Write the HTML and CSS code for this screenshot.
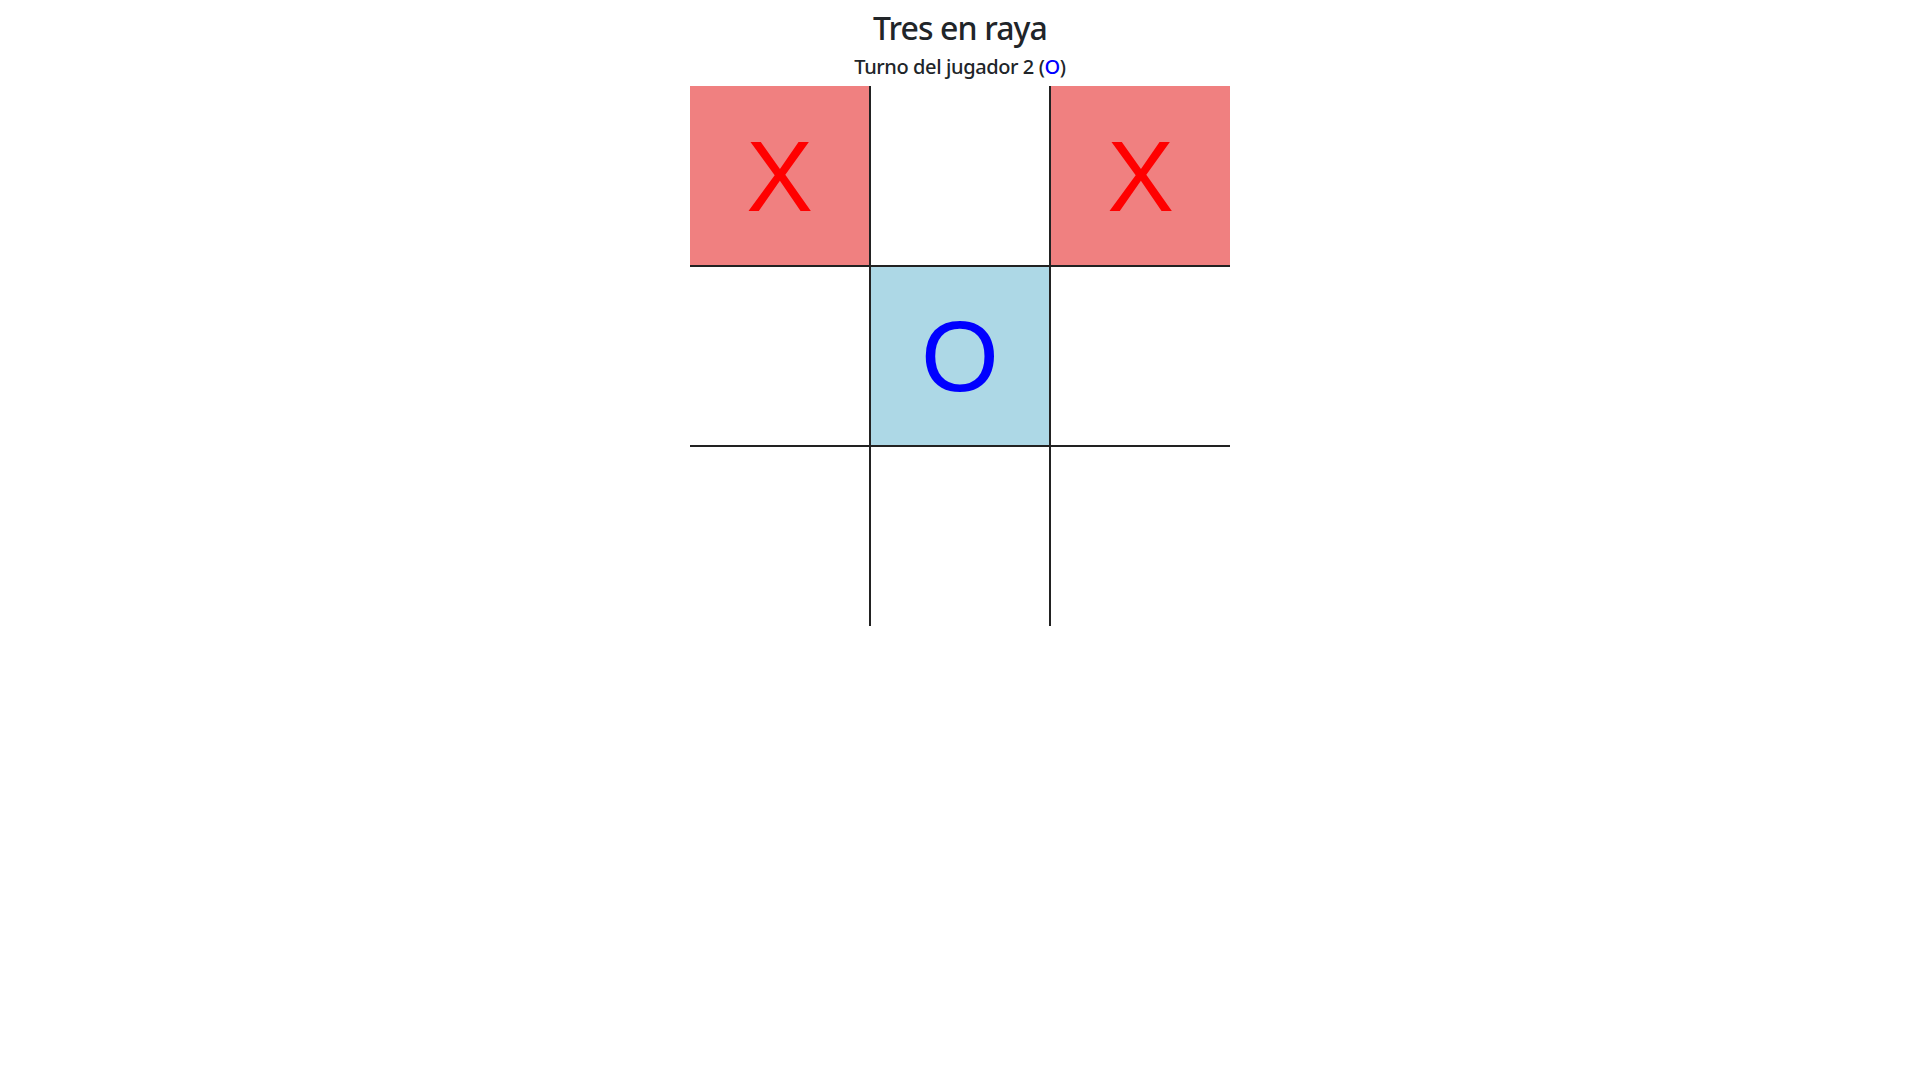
FILE: index.html
```html
<!DOCTYPE html>
<html lang="es">
<head>
<meta charset="utf-8">
<title>Tres en raya</title>
<link rel="stylesheet" href="styles.css">
</head>
<body>
<main class="game">
  <h1 class="title">Tres en raya</h1>
  <p class="turn">Turno del jugador 2 (<span class="turn-o">O</span>)</p>
  <div class="board">
    <div class="cell cell-x">X</div>
    <div class="cell"></div>
    <div class="cell cell-x">X</div>
    <div class="cell"></div>
    <div class="cell cell-o">O</div>
    <div class="cell"></div>
    <div class="cell"></div>
    <div class="cell"></div>
    <div class="cell"></div>
  </div>
</main>
</body>
</html>
```

FILE: styles.css
```css
html, body {
  margin: 0;
  padding: 0;
  background: #ffffff;
}

body {
  font-family: "Noto Sans", "Open Sans", sans-serif;
  color: #212529;
}

.game {
  display: flex;
  flex-direction: column;
  align-items: center;
}

.title {
  margin: 9px 0 0;
  font-size: 32px;
  font-weight: 500;
  line-height: 38px;
  letter-spacing: -0.9px;
}

.turn {
  margin: 8px 0 0;
  font-size: 20px;
  font-weight: 500;
  line-height: 24px;
  letter-spacing: -0.4px;
}

.turn-o {
  color: #0000ff;
}

.board {
  margin-top: 7px;
  display: grid;
  grid-template-columns: repeat(3, 180px);
  grid-template-rows: repeat(3, 180px);
}

.cell {
  box-sizing: border-box;
  display: flex;
  align-items: center;
  justify-content: center;
  font-family: "Liberation Sans", Arial, sans-serif;
  font-size: 100px;
  line-height: 1;
  border: 0 solid #222222;
}

.cell:nth-child(3n+1) { border-right-width: 1px; }
.cell:nth-child(3n+2) { border-left-width: 1px; border-right-width: 1px; }
.cell:nth-child(3n) { border-left-width: 1px; }
.cell:nth-child(-n+3) { border-bottom-width: 1px; }
.cell:nth-child(n+4):nth-child(-n+6) { border-top-width: 1px; border-bottom-width: 1px; }
.cell:nth-child(n+7) { border-top-width: 1px; }

.cell-x {
  background: #f08080;
  color: #ff0000;
}

.cell-o {
  background: #add8e6;
  color: #0000ff;
}
```
